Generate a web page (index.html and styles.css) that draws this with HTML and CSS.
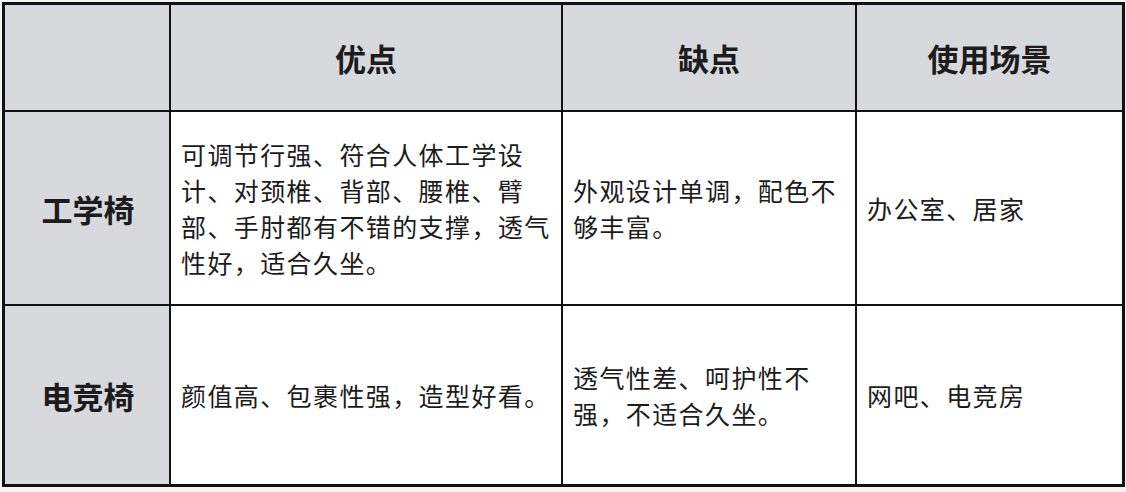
FILE: index.html
```html
<!DOCTYPE html>
<html lang="zh-CN">
<head>
<meta charset="utf-8">
<title>工学椅与电竞椅对比</title>
<link rel="stylesheet" href="styles.css">
</head>
<body>
<div class="table">
  <div class="cell head"></div>
  <div class="cell head">优点</div>
  <div class="cell head">缺点</div>
  <div class="cell head">使用场景</div>

  <div class="cell rowhead">工学椅</div>
  <div class="cell body">可调节行强、符合人体工学设计、对颈椎、背部、腰椎、臂部、手肘都有不错的支撑，透气性好，适合久坐。</div>
  <div class="cell body">外观设计单调，配色不够丰富。</div>
  <div class="cell body">办公室、居家</div>

  <div class="cell rowhead">电竞椅</div>
  <div class="cell body">颜值高、包裹性强，造型好看。</div>
  <div class="cell body">透气性差、呵护性不强，不适合久坐。</div>
  <div class="cell body">网吧、电竞房</div>
</div>
</body>
</html>
```

FILE: styles.css
```css
html, body {
  margin: 0;
  padding: 0;
  background: #f4f5f3;
}

body {
  padding: 2px 0 0 2px;
  font-family: "Noto Sans CJK SC", "Noto Sans", sans-serif;
  color: #1c1c1c;
}

.table {
  display: grid;
  grid-template-columns: 164px 390px 292px 265px;
  grid-template-rows: 105px 192px 178px;
  gap: 2px;
  padding: 3px;
  background: #111;
  width: max-content;
}

.cell {
  display: flex;
  align-items: center;
  background: #fff;
}

.head {
  background: #d8d9dc;
  justify-content: center;
  font-size: 31px;
  font-weight: 700;
}

.rowhead {
  background: #d8d9dc;
  justify-content: center;
  font-size: 31px;
  font-weight: 700;
  padding-left: 2px;
}

.body {
  font-size: 25px;
  letter-spacing: 1.4px;
  line-height: 36px;
  padding: 0 0 0 10px;
}
```
